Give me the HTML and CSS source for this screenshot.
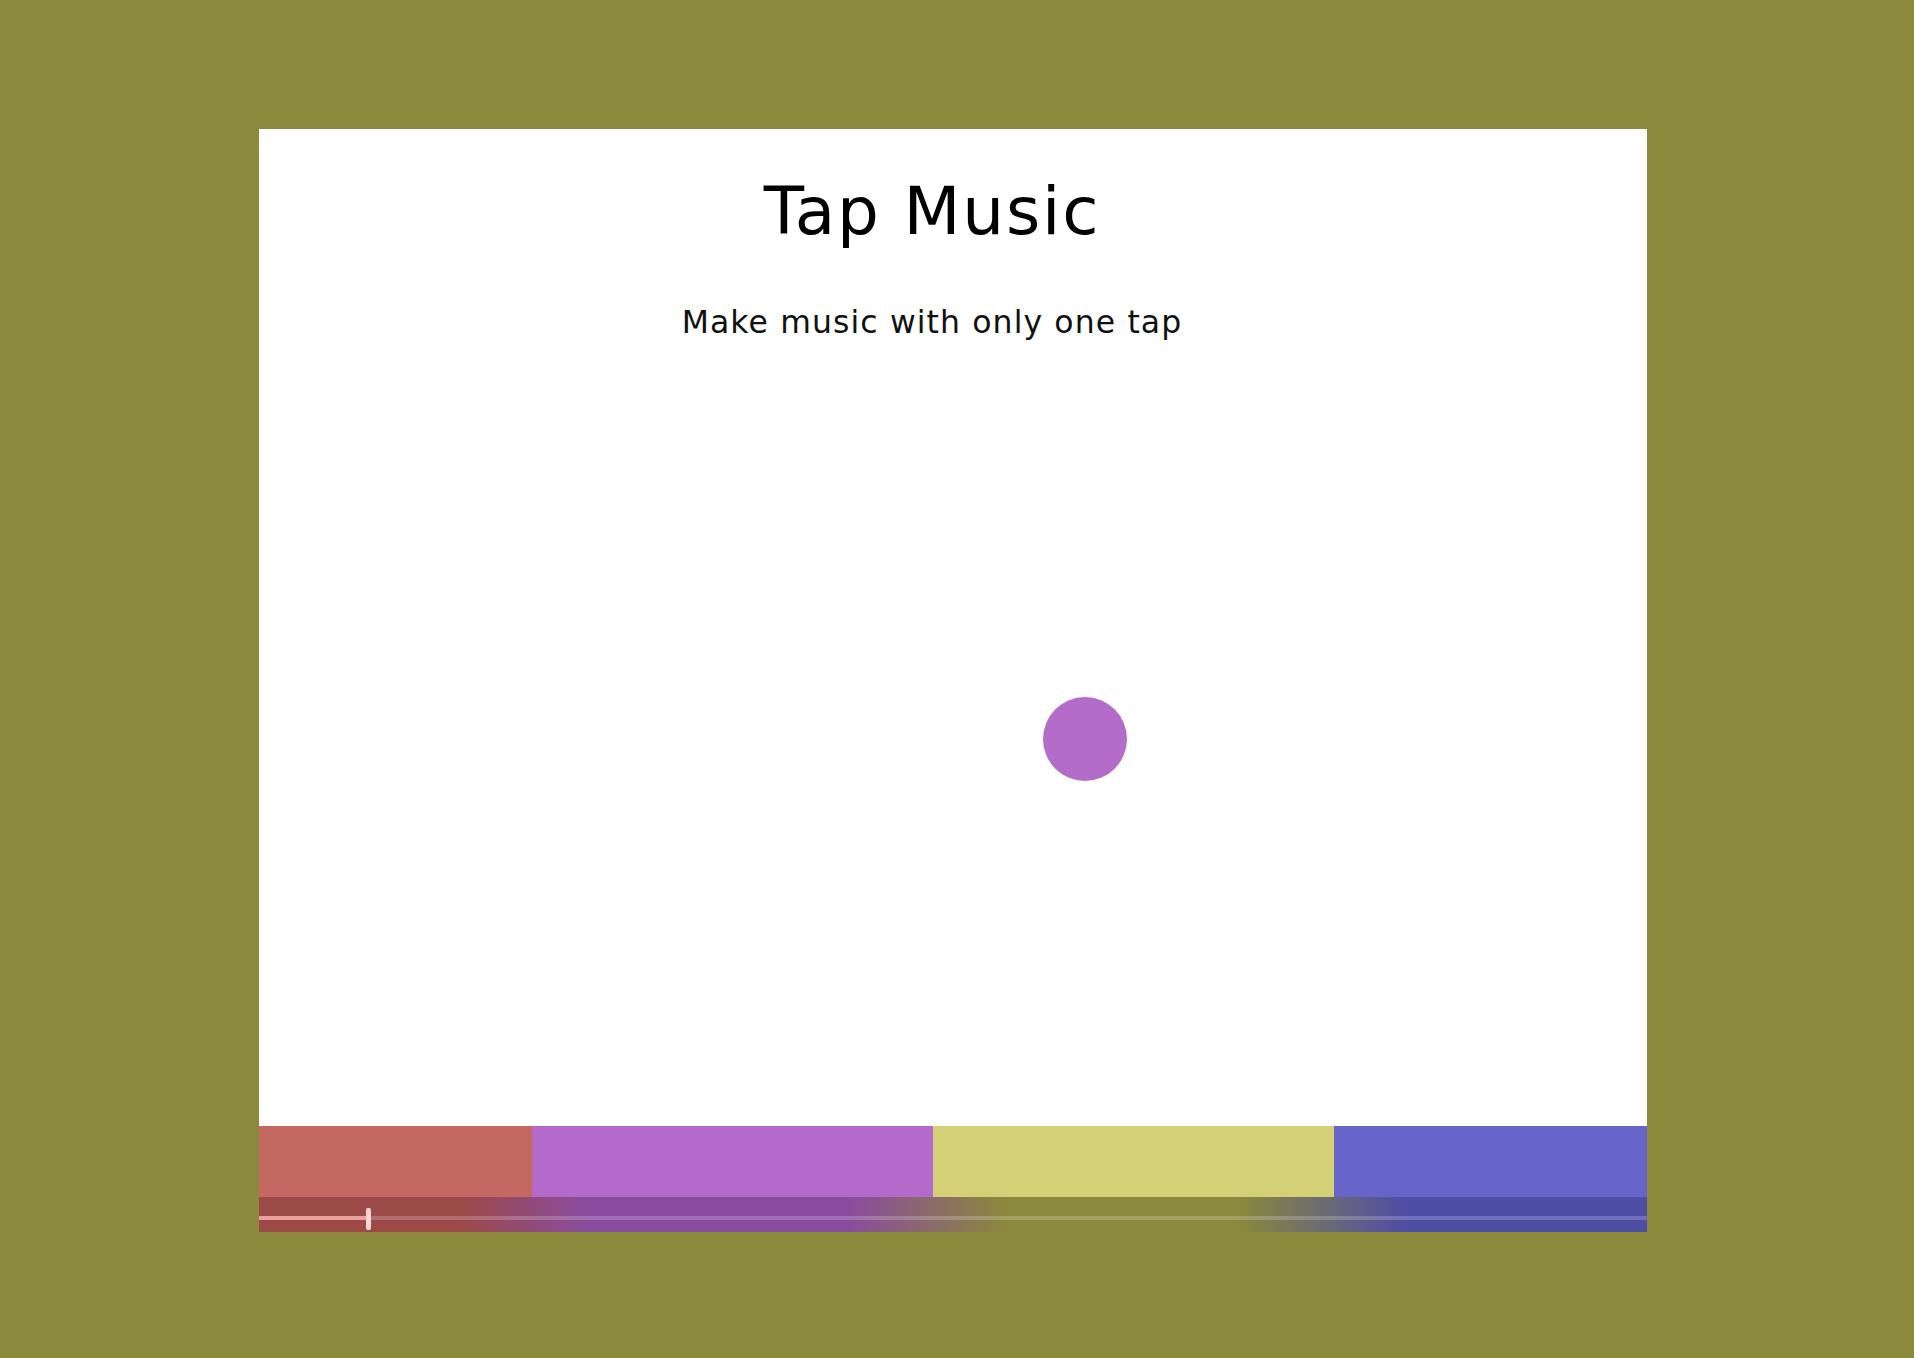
FILE: index.html
```html
<!DOCTYPE html>
<html lang="en">
<head>
<meta charset="utf-8">
<title>Tap Music</title>
<link rel="stylesheet" href="styles.css">
</head>
<body>
  <div class="card">
    <header class="header">
      <h1 class="title">Tap Music</h1>
      <p class="subtitle">Make music with only one tap</p>
    </header>
    <main class="stage">
      <div class="dot"></div>
    </main>
    <div class="bars">
      <div class="bar bar-red"></div>
      <div class="bar bar-purple"></div>
      <div class="bar bar-yellow"></div>
      <div class="bar bar-blue"></div>
    </div>
    <div class="timeline">
      <div class="track"></div>
      <div class="track-fill"></div>
      <div class="thumb"></div>
    </div>
  </div>
</body>
</html>
```
FILE: styles.css
```css
html, body {
  margin: 0;
  padding: 0;
}

body {
  background: #8b8a3c;
  min-height: 100vh;
  font-family: "DejaVu Sans", "Noto Sans", sans-serif;
}

.card {
  margin: 129px 0 0 259px;
  width: 1388px;
  height: 1103px;
  background: #ffffff;
  display: flex;
  flex-direction: column;
}

.header {
  padding: 50px 42px 0 0;
  text-align: center;
}

.title {
  margin: 0;
  font-size: 66px;
  line-height: 66px;
  font-weight: normal;
  letter-spacing: 1.8px;
  color: #000;
}

.subtitle {
  margin: 61px 0 0;
  font-size: 31.5px;
  line-height: 32px;
  letter-spacing: 1.1px;
  color: #111;
}

.stage {
  flex: 1;
  position: relative;
}

.dot {
  position: absolute;
  left: 784px;
  top: 359px;
  width: 84px;
  height: 84px;
  border-radius: 50%;
  background: #b46ccb;
}

.bars {
  display: flex;
  height: 71px;
}

.bar-red { width: 273px; background: #c46862; }
.bar-purple { width: 401px; background: #b46acb; }
.bar-yellow { width: 401px; background: #d4d076; }
.bar-blue { flex: 1; background: #6764ca; }

.timeline {
  height: 35px;
  position: relative;
  background: linear-gradient(to right,
    #9c4a47 0%, #9c4a47 14.5%,
    #8a4c9e 23.5%, #8a4c9e 42.5%,
    #8b893b 54%, #8b893b 70.5%,
    #4f4ea5 82.5%, #4f4ea5 100%);
}

.track {
  position: absolute;
  left: 0;
  right: 0;
  top: 19px;
  height: 4px;
  background: rgba(255, 255, 255, 0.2);
}

.track-fill {
  position: absolute;
  left: 0;
  top: 19px;
  width: 108px;
  height: 4px;
  background: #eaa19d;
}

.thumb {
  position: absolute;
  left: 107px;
  top: 11px;
  width: 5px;
  height: 22px;
  border-radius: 2px;
  background: #ffd6d4;
}
```
